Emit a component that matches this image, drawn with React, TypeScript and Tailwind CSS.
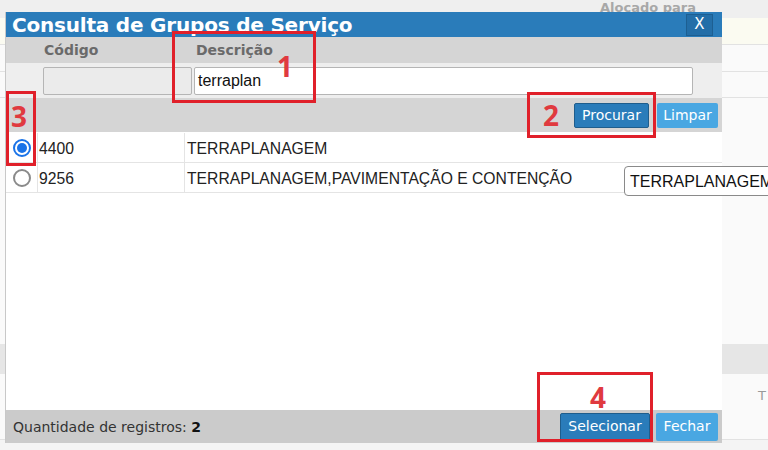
import React from 'react'

const rows = [
  { code: '4400', desc: 'TERRAPLANAGEM', checked: true },
  { code: '9256', desc: 'TERRAPLANAGEM,PAVIMENTAÇÃO E CONTENÇÃO', checked: false },
]

function Radio({ checked }: { checked: boolean }) {
  return checked ? (
    <span className="flex h-[18px] w-[18px] items-center justify-center rounded-full border-2 border-[#1a73e8] bg-white">
      <span className="h-[10px] w-[10px] rounded-full bg-[#1a73e8]" />
    </span>
  ) : (
    <span className="h-[18px] w-[18px] rounded-full border-2 border-[#8a8a8a] bg-white" />
  )
}

function Mark({ n, className }: { n: string; className: string }) {
  return (
    <div className={`absolute border-[3px] border-[#e0202a] ${className}`}>
      <span className="absolute text-[28px] font-bold leading-none text-[#e03a3f] [font-family:'Open_Sans',sans-serif]">{n}</span>
    </div>
  )
}

export default function App() {
  return (
    <div className="relative h-[450px] w-[768px] overflow-hidden bg-[#f4f4f4] [font-family:'DejaVu_Sans',Verdana,sans-serif]">
      {/* page behind the modal */}
      <div className="flex flex-col">
        <div className="h-[18px] bg-[#efefef] pl-[600px] pt-[1px] text-[13px] font-bold leading-[13px] text-[#a8a8a8]">Alocado para</div>
        <div className="h-[27px] border-b border-[#e2e2e2] bg-[#fbfbf1]" />
        <div className="h-[27px] border-b border-[#e2e2e2] bg-[#fafafa]" />
        <div className="h-[26px] border-b border-[#e2e2e2] bg-[#fafafa]" />
        <div className="h-[246px] bg-[#fafafa]" />
        <div className="h-[30px] bg-[#e6e6e6]" />
        <div className="h-[66px] border-b border-[#e2e2e2] bg-[#fafafa] pl-[758px] pt-[12px] text-[13px] text-[#999]">T</div>
      </div>

      {/* modal */}
      <div className="absolute left-[5px] top-[12px] flex h-[431px] w-[717px] flex-col border-l border-[#c8c8c8] bg-white">
        <div className="flex h-[25px] items-center justify-between bg-[#2a7cba] pl-[6px] pr-[9px]">
          <span className="text-[20px] font-bold leading-none tracking-[-0.2px] text-white">Consulta de Grupos de Serviço</span>
          <span className="flex h-[22px] w-[27px] items-center justify-center border border-[#1d5f92] bg-[#236ea8] text-[15px] text-white">X</span>
        </div>
        <div className="flex h-[26px] items-center bg-[#d5d5d5] text-[14px] font-bold text-[#6a6a6a]">
          <span className="w-[190px] pl-[38px]">Código</span>
          <span>Descrição</span>
        </div>
        <div className="flex h-[35px] items-center gap-[2px] bg-[#eeeeee] pl-[37px]">
          <div className="h-[28px] w-[149px] rounded-[2px] border border-[#b5b5b5] bg-[#ebebeb]" />
          <div className="flex h-[28px] w-[499px] items-center rounded-[2px] border border-[#b5b5b5] bg-white pl-[3px] text-[16px] text-[#111] [font-family:'Liberation_Sans',Arial,sans-serif]">
            terraplan
          </div>
        </div>
        <div className="flex h-[34px] items-center justify-end gap-[8px] bg-[#d5d5d5] pr-[4px] text-[14px] text-white">
          <span className="flex h-[25px] w-[75px] items-center justify-center rounded-[2px] border border-[#1f5d8c] bg-[#2a7cba]">Procurar</span>
          <span className="flex h-[25px] w-[61px] items-center justify-center rounded-[2px] bg-[#49a7e2]">Limpar</span>
        </div>
        <div className="flex flex-1 flex-col text-[15.7px] text-[#222] [font-family:'Liberation_Sans',Arial,sans-serif]">
          {rows.map((r, i) => (
            <div key={r.code} className={`flex h-[30px] items-center border-b border-[#e4e4e4] ${i === 0 ? 'mt-[1px]' : ''}`}>
              <div className="flex h-full w-[32px] items-center justify-center border-r border-[#e4e4e4]">
                <Radio checked={r.checked} />
              </div>
              <div className="flex h-full w-[147px] items-center border-r border-[#e4e4e4] pl-[1px] pt-[2px]">{r.code}</div>
              <div className="pl-[2px] pt-[2px]">{r.desc}</div>
            </div>
          ))}
        </div>
        <div className="flex h-[33px] items-center justify-between bg-[#cbcbcb] pl-[7px] pr-[4px]">
          <span className="pt-[2px] text-[14px] text-[#333]">
            Quantidade de registros: <b className="text-[#111]">2</b>
          </span>
          <div className="flex gap-[6px] text-[14px] text-white">
            <span className="flex h-[28px] w-[90px] items-center justify-center rounded-[2px] border border-[#1f5d8c] bg-[#2a7cba]">Selecionar</span>
            <span className="flex h-[28px] w-[62px] items-center justify-center rounded-[2px] bg-[#49a7e2]">Fechar</span>
          </div>
        </div>
      </div>

      {/* tooltip */}
      <div className="absolute left-[624px] top-[166px] flex h-[30px] w-[160px] items-center rounded-[4px] border border-[#8a8a8a] bg-white pl-[5px] pt-[1px] text-[16px] text-[#111] [font-family:'Liberation_Sans',Arial,sans-serif]">
        TERRAPLANAGEM
      </div>

      {/* annotations */}
      <Mark n="1" className="left-[172px] top-[31px] h-[72px] w-[144px] [&>span]:left-[102px] [&>span]:top-[18px]" />
      <Mark n="2" className="left-[527px] top-[92px] h-[46px] w-[129px] [&>span]:left-[13px] [&>span]:top-[6px]" />
      <Mark n="3" className="left-[6px] top-[91px] h-[75px] w-[30px] [&>span]:left-[2px] [&>span]:top-[8px]" />
      <Mark n="4" className="left-[537px] top-[372px] h-[70px] w-[116px] [&>span]:left-[50px] [&>span]:top-[8px]" />
    </div>
  )
}
